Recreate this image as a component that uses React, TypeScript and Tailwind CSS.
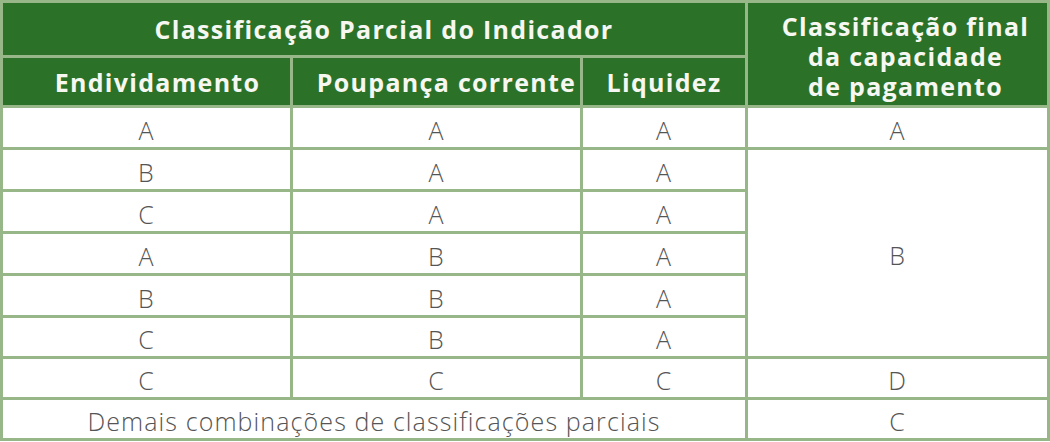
const rows: { e: string; p: string; l: string }[] = [
  { e: "A", p: "A", l: "A" },
  { e: "B", p: "A", l: "A" },
  { e: "C", p: "A", l: "A" },
  { e: "A", p: "B", l: "A" },
  { e: "B", p: "B", l: "A" },
  { e: "C", p: "B", l: "A" },
  { e: "C", p: "C", l: "C" },
];

const rowHeights = ["h-[42px]", "h-[42px]", "h-[42px]", "h-[42px]", "h-[42px]", "h-[41px]", "h-[41px]"];

const head =
  "bg-[#2b7228] text-[#f7f7f2] font-bold text-[25px] tracking-[1.3px] leading-[30px] p-0 border-[3px] border-[#97b788] text-center align-middle";
const cell =
  "border-[3px] border-[#97b788] text-center align-middle text-[25px] leading-[25px] tracking-[1.1px] text-[#555555] font-light p-0 pt-[5px]";

export default function App() {
  return (
    <div
      className="w-[1050px] h-[442px] bg-white overflow-hidden"
      style={{ fontFamily: '"Open Sans", "Liberation Sans", sans-serif' }}
    >
      <table className="w-[1047px] table-fixed border-collapse">
        <colgroup>
          <col className="w-[290px]" />
          <col className="w-[290px]" />
          <col className="w-[165px]" />
          <col className="w-[302px]" />
        </colgroup>
        <thead>
          {/* Header */}
          <tr className="h-[55px]">
            <th colSpan={3} className={`${head} pl-[20px]`}>
              Classificação Parcial do Indicador
            </th>
            <th rowSpan={2} className={`${head} pt-[4px] pl-[16px] leading-[30px]`}>
              Classificação final
              <br />
              da capacidade
              <br />
              de pagamento
            </th>
          </tr>
          <tr className="h-[50px]">
            <th className={`${head} pl-[22px]`}>Endividamento</th>
            <th className={`${head} pl-[20px] whitespace-nowrap tracking-[0.9px]`}>Poupança corrente</th>
            <th className={head}>Liquidez</th>
          </tr>
        </thead>
        <tbody>
          {rows.map((r, i) => (
            <tr key={i} className={rowHeights[i]}>
              <td className={cell}>{r.e}</td>
              <td className={cell}>{r.p}</td>
              <td className={cell}>{r.l}</td>
              {i === 0 && <td className={cell}>A</td>}
              {i === 1 && (
                <td rowSpan={5} className={cell}>
                  B
                </td>
              )}
              {i === 6 && <td className={cell}>D</td>}
            </tr>
          ))}
          <tr className="h-[41px]">
            <td colSpan={3} className={cell}>
              Demais combinações de classificações parciais
            </td>
            <td className={cell}>C</td>
          </tr>
        </tbody>
      </table>
    </div>
  );
}
